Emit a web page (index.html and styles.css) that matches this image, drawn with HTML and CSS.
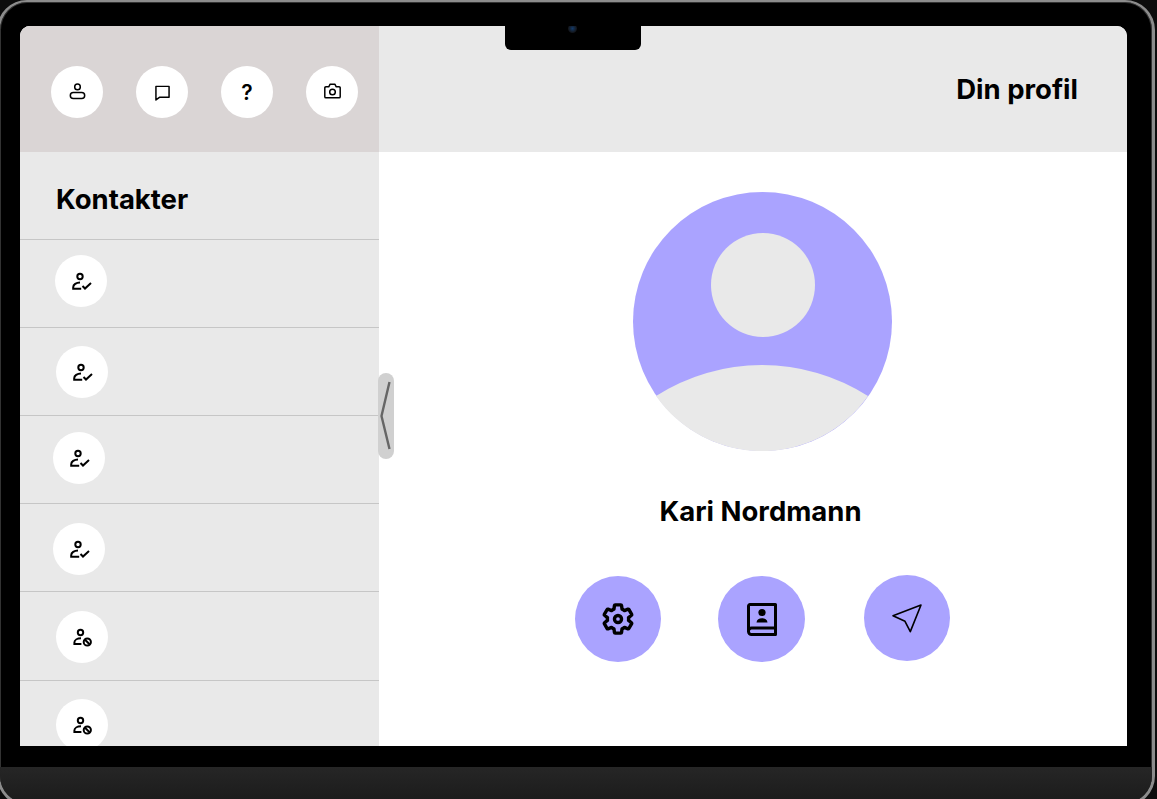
FILE: index.html
```html
<!DOCTYPE html>
<html lang="en">
<head>
    <meta charset="UTF-8">
    <meta name="viewport" content="width=device-width, initial-scale=1.0">
    <title>Din profil</title>
    <link rel="stylesheet" href="styles.css">
</head>
<body>
    <svg class="icon-defs">
        <symbol id="contact-ok" viewBox="0 0 24 24">
            <circle cx="11" cy="7.5" r="2.7" />
            <path d="M11 13.6c-3.8 0-6.8 2-6.8 4.7v1.4h8" />
            <path d="M13.5 17l2.5 2.5 6-5.5" />
        </symbol>
        <symbol id="contact-blocked" viewBox="0 0 24 24">
            <circle cx="10.5" cy="7.5" r="2.7" />
            <path d="M11 13.3c-3.8 0-6.6 1.8-6.6 4.3v1.5h7" />
            <circle cx="17.3" cy="17" r="3.6" />
            <path d="M14.8 14.5l5 5" />
        </symbol>
    </svg>

    <div class="laptop">
        <div class="screen">
            <aside class="sidebar">
                <div class="toolbar">
                    <button class="round-button">
                        <svg class="icon" viewBox="0 0 24 24"><circle cx="12" cy="5.600" r="3.200" /><rect x="3.800" y="12" width="16.400" height="6.800" rx="3.400" /></svg>
                    </button>
                    <button class="round-button">
                        <svg class="icon" viewBox="0 0 24 24"><path d="M4.500 5h15v12.500h-11l-4 3z" /></svg>
                    </button>
                    <button class="round-button question">?</button>
                    <button class="round-button">
                        <svg class="icon" viewBox="0 0 24 24"><path d="M4.500 5.500h3.200l1.600-3h5.400l1.600 3h3.200a1.300 1.300 0 0 1 1.300 1.300v10a1.300 1.300 0 0 1-1.300 1.300h-15a1.300 1.300 0 0 1-1.300-1.300v-10a1.300 1.300 0 0 1 1.300-1.300z" /><circle cx="12" cy="11.500" r="3.200" /></svg>
                    </button>
                </div>
                <h2 class="contacts-title">Kontakter</h2>
                <ul class="contact-list">
                    <li class="contact-row"><span class="contact-circle"><svg class="contact-icon"><use href="#contact-ok" /></svg></span></li>
                    <li class="contact-row"><span class="contact-circle"><svg class="contact-icon"><use href="#contact-ok" /></svg></span></li>
                    <li class="contact-row"><span class="contact-circle"><svg class="contact-icon"><use href="#contact-ok" /></svg></span></li>
                    <li class="contact-row"><span class="contact-circle"><svg class="contact-icon"><use href="#contact-ok" /></svg></span></li>
                    <li class="contact-row"><span class="contact-circle"><svg class="contact-icon"><use href="#contact-blocked" /></svg></span></li>
                    <li class="contact-row"><span class="contact-circle"><svg class="contact-icon"><use href="#contact-blocked" /></svg></span></li>
                </ul>
            </aside>

            <main class="profile">
                <header class="profile-header">
                    <h1>Din profil</h1>
                </header>
                <div class="profile-body">
                    <svg class="avatar" viewBox="0 0 259 259">
                        <circle cx="129.5" cy="129.5" r="129.5" fill="#aaa3ff" />
                        <circle cx="130" cy="93" r="52" fill="#e9e9e9" />
                        <path d="M23 204A197 197 0 0 1 235 204A129.5 129.5 0 0 1 23 204Z" fill="#e9e9e9" />
                    </svg>
                    <div class="profile-name">Kari Nordmann</div>
                    <div class="actions">
                        <button class="action-button">
                            <svg class="gear" viewBox="0 0 24 24"><path d="M19.43 12.98c.04-.32.07-.64.07-.98 0-.34-.03-.66-.07-.98l2.11-1.65c.19-.15.24-.42.12-.64l-2-3.46c-.09-.16-.26-.25-.44-.25-.06 0-.12.01-.17.03l-2.49 1c-.52-.4-1.08-.73-1.69-.98l-.38-2.65C14.46 2.18 14.25 2 14 2h-4c-.25 0-.46.18-.49.42l-.38 2.65c-.61.25-1.17.59-1.69.98l-2.49-1c-.06-.02-.12-.03-.18-.03-.17 0-.34.09-.43.25l-2 3.46c-.13.22-.07.49.12.64l2.11 1.65c-.04.32-.07.65-.07.98 0 .33.03.66.07.98l-2.11 1.65c-.19.15-.24.42-.12.64l2 3.46c.09.16.26.25.44.25.06 0 .12-.01.17-.03l2.49-1c.52.4 1.08.73 1.69.98l.38 2.65c.03.24.24.42.49.42h4c.25 0 .46-.18.49-.42l.38-2.65c.61-.25 1.17-.59 1.69-.98l2.49 1c.06.02.12.03.18.03.17 0 .34-.09.43-.25l2-3.46c.12-.22.07-.49-.12-.64l-2.11-1.65z" /><circle cx="12" cy="12" r="2.5" /></svg>
                        </button>
                        <button class="action-button wide">
                            <svg class="book" viewBox="0 0 30 33">
                                <path class="book-cover" d="M3 1.500h25.500v30H4.500a3 3 0 0 1-3-3V3a1.500 1.500 0 0 1 1.500-1.500z" />
                                <path class="book-cover" d="M1.500 28a3 3 0 0 1 3-3h24" />
                                <circle class="book-person" cx="15" cy="9.500" r="3.600" />
                                <path class="book-person" d="M9.500 19.500c.3-3 2.500-4.300 5.500-4.300s5.200 1.300 5.500 4.300z" />
                            </svg>
                        </button>
                        <button class="action-button nudge-up">
                            <svg class="send" viewBox="0 0 32 30"><path d="M2 12.700l28-10.700-10.700 26.600-5.300-10.300z" /></svg>
                        </button>
                    </div>
                </div>
            </main>

            <div class="notch"><span class="camera"></span></div>
            <div class="collapse-handle">
                <svg viewBox="0 0 16 86"><path d="M11.500 9L3.500 43l8 33" /></svg>
            </div>
        </div>
        <div class="laptop-base"></div>
    </div>
</body>
</html>
```

FILE: styles.css
```css
* {
    margin: 0;
    padding: 0;
    box-sizing: border-box;
    font-family: Inter, "Liberation Sans", sans-serif;
}

html, body {
    height: 100%;
    overflow: hidden;
}

body {
    background: #0c0c0c;
}

.icon-defs {
    display: none;
}

.laptop {
    width: 1158px;
    height: 806px;
    margin-left: -3px;
    padding-top: 23px;
    display: flex;
    flex-direction: column;
    background: #000;
    border: 3px solid #8c8c8c;
    border-top-width: 2px;
    border-radius: 30px;
    overflow: hidden;
    box-shadow: inset 0 0 0 1px #333;
}

.screen {
    position: relative;
    display: flex;
    flex-shrink: 0;
    width: 1107px;
    height: 720px;
    margin-left: 20px;
    margin-top: 1px;
    border-radius: 10px 10px 0 0;
    overflow: hidden;
    background: #fff;
}

.sidebar {
    width: 359px;
    flex-shrink: 0;
    display: flex;
    flex-direction: column;
    background: #e9e9e9;
}

.toolbar {
    height: 126px;
    flex-shrink: 0;
    display: flex;
    align-items: center;
    gap: 33px;
    padding: 6px 0 0 31px;
    background: #dad5d5;
}

.round-button {
    width: 52px;
    height: 52px;
    border: none;
    border-radius: 50%;
    background: #fff;
    display: flex;
    align-items: center;
    justify-content: center;
    color: #000;
}

.icon {
    width: 21px;
    height: 21px;
    fill: none;
    stroke: #000;
    stroke-width: 1.7;
    stroke-linejoin: round;
}

.question {
    font-size: 21px;
    font-weight: 600;
}

.contacts-title {
    height: 88px;
    flex-shrink: 0;
    padding: 30px 0 0 36px;
    font-size: 27.5px;
    line-height: 34px;
    font-weight: 700;
    color: #000;
    border-bottom: 1px solid #c6c6c6;
}

.contact-list {
    list-style: none;
}

.contact-row {
    height: 88px;
    display: flex;
    border-bottom: 1px solid #c6c6c6;
}

.contact-row:nth-child(1) { padding: 15px 0 0 35px; }
.contact-row:nth-child(2) { padding: 18px 0 0 36px; }
.contact-row:nth-child(3) { padding: 16px 0 0 33px; }
.contact-row:nth-child(4) { padding: 19px 0 0 33px; }
.contact-row:nth-child(5) { padding: 19px 0 0 36px; height: 89px; }
.contact-row:nth-child(6) { padding: 18px 0 0 36px; }

.contact-circle {
    width: 52px;
    height: 52px;
    border-radius: 50%;
    background: #fff;
    display: flex;
    align-items: center;
    justify-content: center;
}

.contact-icon {
    width: 24px;
    height: 24px;
    fill: none;
    stroke: #000;
    stroke-width: 2;
}

.profile {
    flex: 1;
    display: flex;
    flex-direction: column;
}

.profile-header {
    height: 126px;
    flex-shrink: 0;
    display: flex;
    align-items: center;
    justify-content: flex-end;
    padding-right: 49px;
    background: #e9e9e9;
}

.profile-header h1 {
    font-size: 27.5px;
    font-weight: 700;
    color: #000;
}

.profile-body {
    display: flex;
    flex-direction: column;
    align-items: center;
    padding: 40px 0 0 18px;
}

.avatar {
    width: 259px;
    height: 259px;
}

.profile-name {
    margin-top: 43px;
    margin-right: 3px;
    font-size: 27.5px;
    line-height: 34px;
    font-weight: 700;
    color: #000;
}

.actions {
    display: flex;
    gap: 57px;
    margin: 48px 0 0 1px;
}

.action-button {
    width: 86px;
    height: 86px;
    border: none;
    border-radius: 50%;
    background: #aaa3ff;
    display: flex;
    align-items: center;
    justify-content: center;
}

.wide {
    width: 87px;
}

.nudge-up {
    margin: -1px 0 0 2px;
}

.gear {
    width: 34px;
    height: 34px;
    fill: none;
    stroke: #000;
    stroke-width: 2.4;
    stroke-linejoin: round;
}

.book {
    width: 30px;
    height: 33px;
}

.book-cover {
    fill: none;
    stroke: #000;
    stroke-width: 3;
    stroke-linejoin: round;
}

.book-person {
    fill: #000;
}

.send {
    width: 32px;
    height: 30px;
    fill: none;
    stroke: #000;
    stroke-width: 1.6;
    stroke-linejoin: round;
}

.notch {
    position: absolute;
    top: 0;
    left: 485px;
    width: 136px;
    height: 24px;
    background: #000;
    border-radius: 0 0 6px 6px;
}

.camera {
    position: absolute;
    top: -2px;
    left: 63px;
    width: 9px;
    height: 9px;
    border-radius: 50%;
    background: radial-gradient(circle, #123a6a 0, #14181f 60%, #0a0a0a 100%);
}

.collapse-handle {
    position: absolute;
    top: 347px;
    left: 358px;
    width: 16px;
    height: 86px;
    border-radius: 8px;
    background: #d0d0d0;
}

.collapse-handle svg {
    display: block;
    width: 16px;
    height: 86px;
    fill: none;
    stroke: #666;
    stroke-width: 2.4;
}

.laptop-base {
    flex: 1;
    margin-top: 21px;
    background: linear-gradient(#262626, #1b1b1b);
}
```
